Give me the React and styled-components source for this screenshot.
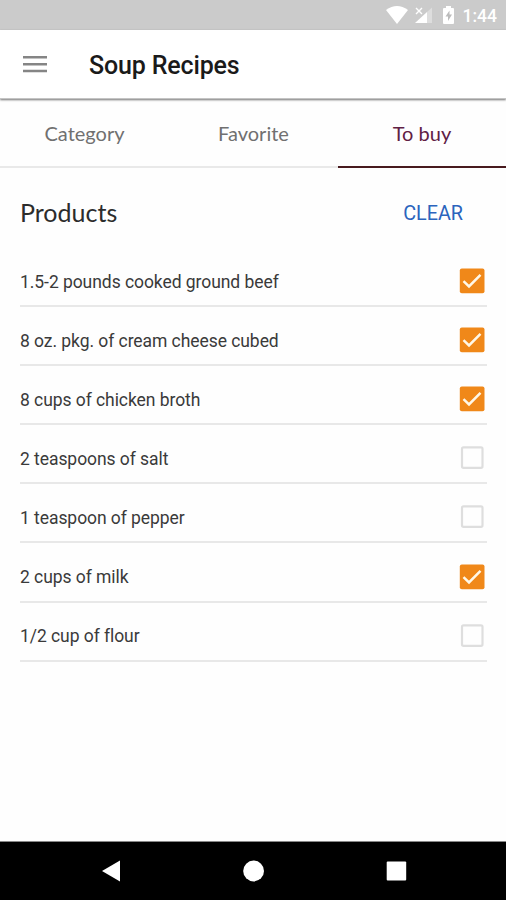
import { useState } from "react";
import styled, { createGlobalStyle } from "styled-components";

const GlobalStyle = createGlobalStyle`
  * {
    box-sizing: border-box;
  }
  body {
    margin: 0;
    background: #fefefe;
    font-family: Roboto, sans-serif;
  }
  button {
    padding: 0;
    border: none;
    background: none;
    font: inherit;
    cursor: pointer;
  }
  svg {
    display: block;
  }
`;

const Screen = styled.div`
  display: flex;
  flex-direction: column;
  height: 900px;
  max-width: 506px;
  overflow: hidden;
`;

const StatusBar = styled.div`
  display: flex;
  justify-content: flex-end;
  align-items: center;
  height: 30px;
  padding-right: 9px;
  background: #cbcbcb;
  color: #fff;
`;

const Clock = styled.span`
  margin-left: 5px;
  font-size: 17.5px;
  font-weight: 500;
  line-height: 30px;
  padding-top: 2px;
`;

const Header = styled.header`
  display: flex;
  align-items: center;
  height: 69px;
  padding-left: 23px;
  background: #fff;
  border-bottom: 1px solid #c4c4c4;
  box-shadow: 0 1px 2px rgba(0, 0, 0, 0.55);
`;

const Title = styled.h1`
  margin: 4px 0 0 42px;
  font-size: 25px;
  font-weight: 500;
  letter-spacing: -0.15px;
  line-height: 30px;
  color: #1a1a1a;
`;

const Tabs = styled.nav`
  display: grid;
  grid-template-columns: 169px 169px 168px;
  height: 69px;
`;

const Tab = styled.button`
  && {
    padding-top: 1px;
    border-bottom: 2px solid ${({ $active }) => ($active ? "#481a1e" : "#e9e9e9")};
    font-family: Lato, sans-serif;
    font-size: 20px;
    color: ${({ $active }) => ($active ? "#602044" : "#707070")};
  }
`;

const Main = styled.main`
  flex: 1;
  padding: 25px 19px 0 20px;
`;

const ListHeader = styled.div`
  display: flex;
  justify-content: space-between;
  align-items: center;
  height: 40px;
  padding-right: 24px;
  margin-bottom: 15px;
`;

const ListTitle = styled.h2`
  margin: 0;
  padding-bottom: 3px;
  font-family: Lato, sans-serif;
  font-size: 25px;
  font-weight: 400;
  color: #2c2c2c;
`;

const ClearButton = styled.button`
  && {
    font-size: 19.8px;
    color: #2b64bd;
  }
`;

const List = styled.ul`
  margin: 0;
  padding: 0;
  list-style: none;
`;

const Row = styled.li`
  display: flex;
  justify-content: space-between;
  align-items: center;
  height: 59.1px;
  padding: 9px 2px 0 0;
  border-bottom: 2px solid #e8e8e8;
`;

const Product = styled.span`
  padding-top: 1px;
  font-size: 17.5px;
  letter-spacing: -0.06px;
  line-height: 24px;
  color: #3a3a3a;
`;

const NavBar = styled.footer`
  display: flex;
  justify-content: space-between;
  align-items: center;
  height: 59px;
  padding: 0 99px 0 101px;
  border-top: 1px solid #888;
  background: #000;
`;

const products = [
  { name: "1.5-2 pounds cooked ground beef", checked: true },
  { name: "8 oz. pkg. of cream cheese cubed", checked: true },
  { name: "8 cups of chicken broth", checked: true },
  { name: "2 teaspoons of salt", checked: false },
  { name: "1 teaspoon of pepper", checked: false },
  { name: "2 cups of milk", checked: true },
  { name: "1/2 cup of flour", checked: false },
];

const tabs = ["Category", "Favorite", "To buy"];

function StatusIcons() {
  return (
    <svg width="72" height="30" viewBox="0 0 72 30" fill="#fff">
      <path d="M0 10Q11 2 22 10L11 24Z" />
      <path d="M41 12L46 7.5V23H41Z" opacity=".35" />
      <path d="M29 23L41 12V23Z" />
      <path d="M30 8l6 6M36 8l-6 6" stroke="#fff" strokeWidth="1.4" />
      <path d="M60 6h5v2h2q1 0 1 1v14q0 1-1 1h-9q-1 0-1-1V9q0-1 1-1h2Z" />
      <path d="M63.5 10.5L59.5 16.5H62V21L66 14.5H63.5Z" fill="#bbb" />
    </svg>
  );
}

function Checkbox({ checked, label, onClick }) {
  return (
    <button role="checkbox" aria-checked={checked} aria-label={label} onClick={onClick}>
      <svg width="26" height="26" viewBox="0 0 26 26" fill="none">
        {checked ? (
          <>
            <rect x="0.8" y="0.5" width="24.7" height="24.7" rx="2" fill="#f08819" />
            <path d="M4.5 13.1L10 18.4L21.5 6.8" stroke="#fff8e8" strokeWidth="2.5" />
          </>
        ) : (
          <rect x="3" y="2.3" width="20.5" height="20.5" rx="1.5" stroke="#dedede" strokeWidth="2.2" />
        )}
      </svg>
    </button>
  );
}

function App() {
  const [items, setItems] = useState(products);
  const [active, setActive] = useState("To buy");

  const toggle = (name) =>
    setItems(items.map((i) => (i.name === name ? { ...i, checked: !i.checked } : i)));

  return (
    <Screen>
      <GlobalStyle />
      <StatusBar>
        <StatusIcons />
        <Clock>1:44</Clock>
      </StatusBar>
      <Header>
        <button aria-label="Menu">
          <svg width="24" height="18" viewBox="0 0 24 18" fill="#858585">
            <path d="M0 1H24V3.5H0ZM0 8H24V10.5H0ZM0 14.7H24V17.2H0Z" />
          </svg>
        </button>
        <Title>Soup Recipes</Title>
      </Header>
      <Tabs>
        {tabs.map((tab) => (
          <Tab key={tab} $active={tab === active} onClick={() => setActive(tab)}>
            {tab}
          </Tab>
        ))}
      </Tabs>
      <Main>
        <ListHeader>
          <ListTitle>Products</ListTitle>
          <ClearButton onClick={() => setItems([])}>CLEAR</ClearButton>
        </ListHeader>
        <List>
          {items.map(({ name, checked }) => (
            <Row key={name}>
              <Product>{name}</Product>
              <Checkbox checked={checked} label={name} onClick={() => toggle(name)} />
            </Row>
          ))}
        </List>
      </Main>
      <NavBar>
        <svg width="20" height="22" viewBox="0 0 20 22" fill="#fff">
          <path d="M1 11L19 0.5V21.5Z" />
        </svg>
        <svg width="22" height="22" viewBox="0 0 22 22" fill="#fff">
          <circle cx="10.6" cy="11" r="10.4" />
        </svg>
        <svg width="21" height="20" viewBox="0 0 21 20" fill="#fff">
          <rect x="0.7" y="0.5" width="19.5" height="19" rx="1" />
        </svg>
      </NavBar>
    </Screen>
  );
}

export default App;
